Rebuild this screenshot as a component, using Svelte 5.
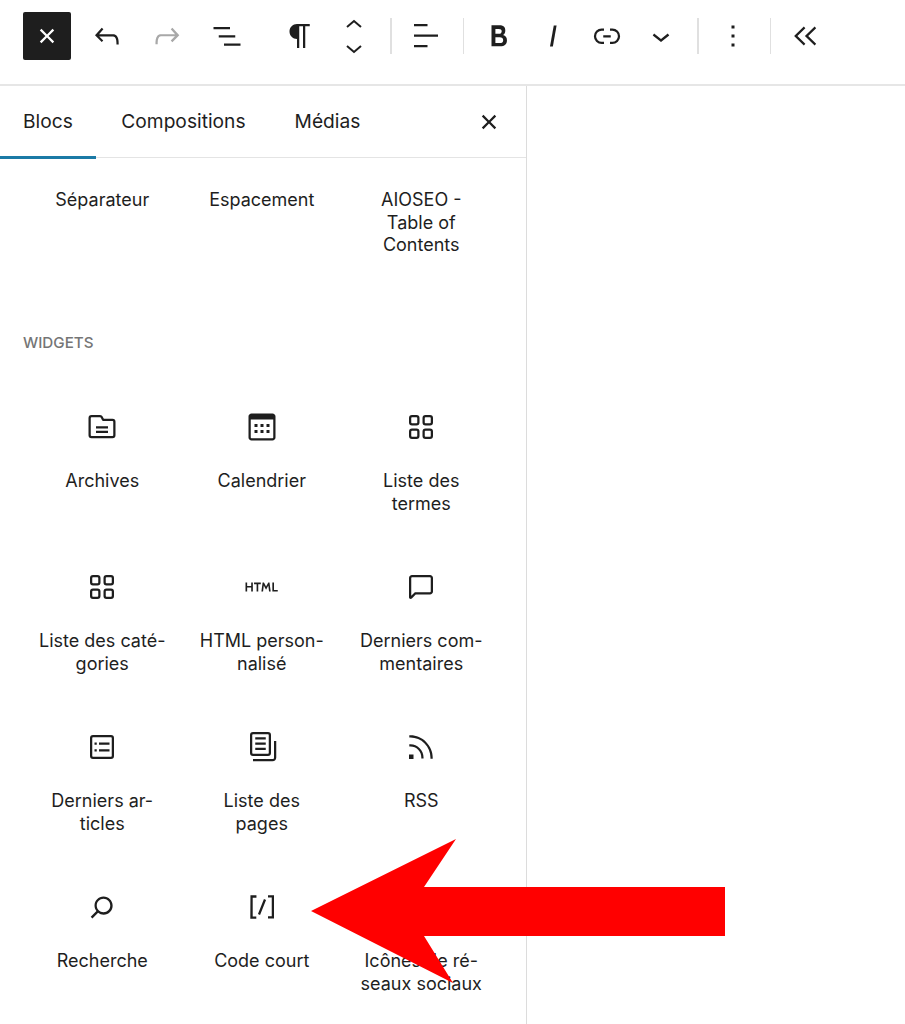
<script>
  const paths = {
    closeSmall: 'M12 13.06l3.712 3.713 1.061-1.06L13.061 12l3.712-3.712-1.06-1.06L12 10.938 8.288 7.227l-1.061 1.06L10.939 12l-3.712 3.712 1.06 1.061L12 13.061z',
    undo: 'M18.3 11.7c-.6-.6-1.4-.9-2.3-.9H6.7l2.9-3.3-1.1-1-4.5 5L8.5 16l1-1-2.7-2.7H16c.5 0 .9.2 1.3.5 1 1 1 3.4 1 4.5v.3h1.5v-.2c0-1.5 0-4.3-1.5-5.7z',
    redo: 'M15.6 6.5l-1.1 1 2.9 3.3H8c-.9 0-1.7.3-2.3.9-1.4 1.5-1.4 4.2-1.4 5.6v.2h1.5v-.3c0-1.1 0-3.5 1-4.5.3-.3.7-.5 1.3-.5h9.2L14.5 15l1.1 1.1 4.6-4.6-4.6-5z',
    listView: 'M3 6h11v1.5H3V6Zm3.5 5.5h11V13h-11v-1.5ZM21 17H10v1.5h11V17Z',
    paragraph: 'm9.99609 14v-.2251l.00391.0001v6.225h1.5v-14.5h2.5v14.5h1.5v-14.5h3v-1.5h-8.50391c-2.76142 0-5 2.23858-5 5 0 2.7614 2.23858 5 5 5z',
    alignLeft: 'M13 5.5H4V4h9v1.5Zm7 7H4V11h16v1.5Zm-7 7H4V18h9v1.5Z',
    bold: 'M14.7 11.3c1-.6 1.5-1.6 1.5-3 0-2.3-1.3-3.4-4-3.4H7v14h5.8c1.4 0 2.5-.3 3.3-1 .8-.7 1.2-1.7 1.2-2.9.1-1.9-.8-3.1-2.6-3.7zm-5.1-4h2.3c.6 0 1.1.1 1.4.4.3.3.5.7.5 1.2s-.2 1-.5 1.2c-.3.3-.8.4-1.4.4H9.6V7.3zm4.6 9c-.4.3-1 .4-1.7.4H9.6v-3.9h2.9c.7 0 1.3.2 1.7.5.4.3.6.8.6 1.5s-.2 1.2-.6 1.5z',
    italic: 'M12.5 5L10 19h1.9l2.5-14z',
    link: 'M10 17.389H8.444A5.194 5.194 0 1 1 8.444 7H10v1.5H8.444a3.694 3.694 0 0 0 0 7.389H10v1.5ZM14 7h1.556a5.194 5.194 0 0 1 0 10.39H14v-1.5h1.556a3.694 3.694 0 0 0 0-7.39H14V7Zm-4.5 6h5v-1.5h-5V13Z',
    chevronDown: 'M17.5 11.6L12 16l-5.5-4.4.9-1.2L12 14l4.5-3.6 1 1.2z',
    more: 'M13 19h-2v-2h2v2zm0-6h-2v-2h2v2zm0-6h-2V5h2v2z',
    collapse: 'M10.9 6.8 5.6 12l5.3 5.2-1 1.1L3.4 12l6.5-6.3zM18.1 6.8 12.8 12l5.3 5.2-1 1.1L10.6 12l6.5-6.3z',
    archive: 'M11.934 7.406a1 1 0 0 0 .914.594H19a.5.5 0 0 1 .5.5v9a.5.5 0 0 1-.5.5H5a.5.5 0 0 1-.5-.5V6a.5.5 0 0 1 .5-.5h5.764a.5.5 0 0 1 .447.276l.723 1.63Zm1.064-1.216a.5.5 0 0 0 .462.31H19a2 2 0 0 1 2 2v9a2 2 0 0 1-2 2H5a2 2 0 0 1-2-2V6a2 2 0 0 1 2-2h5.764a2 2 0 0 1 1.789 1.106l.445 1.084ZM8 13V11.5h8V13H8Zm0 3v-1.5h8V16H8Z',
    calendar: 'M19 3H5c-1.1 0-2 .9-2 2v14c0 1.1.9 2 2 2h14c1.1 0 2-.9 2-2V5c0-1.1-.9-2-2-2zm.5 16c0 .3-.2.5-.5.5H5c-.3 0-.5-.2-.5-.5V7h15v12zM9 10H7v2h2v-2zm0 4H7v2h2v-2zm4-4h-2v2h2v-2zm4 0h-2v2h2v-2zm-4 4h-2v2h2v-2zm4 0h-2v2h2v-2z',
    category: 'M6 5.5h3a.5.5 0 01.5.5v3a.5.5 0 01-.5.5H6a.5.5 0 01-.5-.5V6a.5.5 0 01.5-.5zM4 6a2 2 0 012-2h3a2 2 0 012 2v3a2 2 0 01-2 2H6a2 2 0 01-2-2V6zm11-.5h3a.5.5 0 01.5.5v3a.5.5 0 01-.5.5h-3a.5.5 0 01-.5-.5V6a.5.5 0 01.5-.5zM13 6a2 2 0 012-2h3a2 2 0 012 2v3a2 2 0 01-2 2h-3a2 2 0 01-2-2V6zm5 8.5h-3a.5.5 0 00-.5.5v3a.5.5 0 00.5.5h3a.5.5 0 00.5-.5v-3a.5.5 0 00-.5-.5zM15 13a2 2 0 00-2 2v3a2 2 0 002 2h3a2 2 0 002-2v-3a2 2 0 00-2-2h-3zm-9 1.5h3a.5.5 0 01.5.5v3a.5.5 0 01-.5.5H6a.5.5 0 01-.5-.5v-3a.5.5 0 01.5-.5zM4 15a2 2 0 012-2h3a2 2 0 012 2v3a2 2 0 01-2 2H6a2 2 0 01-2-2v-3z',
    html: 'M4.8 11.4H2.1V9H1v6h1.1v-2.6h2.7V15h1.1V9H4.8v2.4zm1.9-1.3h1.7V15h1.1v-4.9h1.7V9H6.7v1.1zM16.2 9l-1.5 2.7L13.3 9h-.9l-.8 6h1.1l.5-4 1.5 2.8 1.5-2.8.5 4h1.1L17 9h-.8zm3.8 5V9h-1.1v6h3.6v-1H20z',
    comment: 'M18 4H6c-1.1 0-2 .9-2 2v12.9c0 .6.5 1.1 1.1 1.1.3 0 .5-.1.8-.3L8.5 17H18c1.1 0 2-.9 2-2V6c0-1.1-.9-2-2-2zm.5 11c0 .3-.2.5-.5.5H7.9l-2.4 2.4V6c0-.3.2-.5.5-.5h12c.3 0 .5.2.5.5v9z',
    postList: 'M18 5.5H6a.5.5 0 00-.5.5v12a.5.5 0 00.5.5h12a.5.5 0 00.5-.5V6a.5.5 0 00-.5-.5zM6 4h12a2 2 0 012 2v12a2 2 0 01-2 2H6a2 2 0 01-2-2V6a2 2 0 012-2zm1 5h1.5v1.5H7V9zm1.5 4.5H7V15h1.5v-1.5zM10 9h7v1.5h-7V9zm7 4.5h-7V15h7v-1.5z',
    pages: 'M14.5 5.5h-7V7h7V5.5ZM7.5 9h7v1.5h-7V9Zm7 3.5h-7V14h7v-1.5ZM16 2H6a2 2 0 0 0-2 2v12a2 2 0 0 0 2 2h10a2 2 0 0 0 2-2V4a2 2 0 0 0-2-2ZM6 3.5h10a.5.5 0 0 1 .5.5v12a.5.5 0 0 1-.5.5H6a.5.5 0 0 1-.5-.5V4a.5.5 0 0 1 .5-.5ZM20 8v11c0 .69-.31 1-.999 1H6v1.5h13.001c1.52 0 2.499-.982 2.499-2.5V8H20Z',
    rss: 'M5 10.2h-.8v1.5H5c1.9 0 3.8.8 5.1 2.1 1.4 1.4 2.1 3.2 2.1 5.1v.8h1.5V19c0-2.3-.9-4.5-2.6-6.2-1.6-1.6-3.8-2.6-6.1-2.6zm10.4-1.6C12.6 5.8 8.9 4.2 5 4.2h-.8v1.5H5c3.5 0 6.9 1.4 9.4 3.9s3.9 5.8 3.9 9.4v.8h1.5V19c0-3.9-1.6-7.6-4.4-10.4zM4 20h3v-3H4v3z',
    search: 'M13 5c-3.3 0-6 2.7-6 6 0 1.4.5 2.7 1.3 3.7l-3.8 3.8 1.1 1.1 3.8-3.8c1 .8 2.3 1.3 3.7 1.3 3.3 0 6-2.7 6-6S16.3 5 13 5zm0 10.5c-2.5 0-4.5-2-4.5-4.5s2-4.5 4.5-4.5 4.5 2 4.5 4.5-2 4.5-4.5 4.5z',
    shortcode: 'M16 4.2v1.5h2.5v12.5H16v1.5h4V4.2h-4zM4.2 19.8h4v-1.5H5.8V5.8h2.5V4.2h-4l-.1 15.6zm5.1-3.1l1.4.6 4-10-1.4-.6-4 10z'
  };

  const topBlocks = ['Séparateur', 'Espacement', 'AIOSEO -\nTable of\nContents'];
  const widgets = [
    ['archive', 'Archives'], ['calendar', 'Calendrier'], ['category', 'Liste des\ntermes'],
    ['category', 'Liste des caté-\ngories'], ['html', 'HTML person-\nnalisé'], ['comment', 'Derniers com-\nmentaires'],
    ['postList', 'Derniers ar-\nticles'], ['pages', 'Liste des\npages'], ['rss', 'RSS'],
    ['search', 'Recherche'], ['shortcode', 'Code court'], [null, 'Icônes de ré-\nseaux sociaux']
  ];
</script>

{#snippet icon(name)}
  <svg class="icon" viewBox="0 0 24 24" aria-hidden="true"><path fill-rule="evenodd" d={paths[name]} /></svg>
{/snippet}

<div class="page">
  <header class="toolbar">
    <button class="tb close-main">{@render icon('closeSmall')}</button>
    <button class="tb w60 ml6">{@render icon('undo')}</button>
    <button class="tb w60 off">{@render icon('redo')}</button>
    <button class="tb w60">{@render icon('listView')}</button>
    <button class="tb w54 ml16">{@render icon('paragraph')}</button>
    <div class="mover">
      <svg class="chev" viewBox="0 0 18 10"><path d="M2 8l7-6 7 6" /></svg>
      <svg class="chev" viewBox="0 0 18 10"><path d="M2 2l7 6 7-6" /></svg>
    </div>
    <span class="sep s1"></span>
    <button class="tb w60 a">{@render icon('alignLeft')}</button>
    <span class="sep s2"></span>
    <button class="tb w54 b">{@render icon('bold')}</button>
    <button class="tb w54">{@render icon('italic')}</button>
    <button class="tb w54">{@render icon('link')}</button>
    <button class="tb w54">{@render icon('chevronDown')}</button>
    <span class="sep s3"></span>
    <button class="tb w60 d">{@render icon('more')}</button>
    <span class="sep s4"></span>
    <button class="tb w60 c">{@render icon('collapse')}</button>
  </header>

  <div class="body">
    <aside class="panel">
      <nav class="tabs">
        <span class="tab active">Blocs</span>
        <span class="tab t2">Compositions</span>
        <span class="tab t3">Médias</span>
        <button class="tb panel-close">{@render icon('closeSmall')}</button>
      </nav>
      <div class="scroll">
        <div class="grid first">
          {#each topBlocks as label}
            <div class="cell"><span class="label">{label}</span></div>
          {/each}
        </div>
        <h2>Widgets</h2>
        <div class="grid">
          {#each widgets as [name, label]}
            <div class="cell">
              <span class="icon-slot">{#if name}{@render icon(name)}{/if}</span>
              <span class="label">{label}</span>
            </div>
          {/each}
        </div>
      </div>
    </aside>
    <main class="canvas"></main>
  </div>

  <svg class="arrow" viewBox="0 0 905 1024" aria-hidden="true">
    <polygon points="311,911 456,839 424,887 725,887 725,936 424,936 453,983" />
  </svg>
</div>

<style>
  :global(body) {
    margin: 0;
    background: #fff;
  }
  .page {
    position: relative;
    width: 905px;
    height: 1024px;
    overflow: hidden;
    background: #fff;
    color: #1e1e1e;
    font-family: Inter, "Liberation Sans", sans-serif;
  }
  .toolbar {
    box-sizing: border-box;
    height: 86px;
    display: flex;
    align-items: flex-start;
    padding: 12px 0 0 23px;
    border-bottom: 2px solid #e6e6e6;
  }
  .tb {
    display: flex;
    align-items: center;
    justify-content: center;
    height: 48px;
    padding: 0;
    border: 0;
    background: none;
    color: #1e1e1e;
    flex: none;
  }
  .icon {
    display: block;
    width: 36px;
    height: 36px;
    fill: currentColor;
  }
  .close-main {
    width: 48px;
    background: #1e1e1e;
    color: #fff;
    border-radius: 2px;
  }
  .w60 { width: 60px; }
  .w54 { width: 54px; }
  .ml6 { margin-left: 6px; }
  .ml16 { margin-left: 16px; }
  .off { color: #a8a8a8; }
  .mover {
    width: 54px;
    height: 48px;
    flex: none;
    display: flex;
    flex-direction: column;
    align-items: center;
    justify-content: space-between;
    padding: 7px 0 6px;
    box-sizing: border-box;
  }
  .chev {
    display: block;
    width: 18px;
    height: 10px;
    fill: none;
    stroke: #1e1e1e;
    stroke-width: 2;
  }
  .sep {
    flex: none;
    width: 1.5px;
    height: 36px;
    margin-top: 6px;
    background: #e0e0e0;
  }
  .s1 { margin-left: 9px; }
  .a { margin-left: 4.5px; }
  .s2 { margin-left: 6.5px; }
  .b { margin-left: 8px; }
  .s3 { margin-left: 9px; }
  .d { margin-left: 4.5px; }
  .s4 { margin-left: 6.5px; }
  .c { margin-left: 5.5px; }

  .body {
    display: flex;
    height: 938px;
  }
  .panel {
    box-sizing: content-box;
    width: 526px;
    flex: none;
    border-right: 1.5px solid #dcdcdc;
    overflow: hidden;
  }
  .tabs {
    position: relative;
    display: flex;
    align-items: center;
    height: 72px;
    border-bottom: 1.5px solid #e4e4e4;
    box-sizing: border-box;
    padding: 0 0 1.5px 23px;
    font-size: 19.2px;
  }
  .tab { line-height: 24px; }
  .tab.active::after {
    content: "";
    position: absolute;
    left: 0;
    bottom: -1.5px;
    width: 96px;
    height: 2.5px;
    background: #1b7aa6;
  }
  .t2 { margin-left: 48.5px; }
  .t3 { margin-left: 49px; }
  .panel-close {
    position: absolute;
    left: 471px;
    top: 12px;
    width: 36px;
  }
  .scroll {
    padding: 31px 25px 0 22.5px;
  }
  .grid {
    display: grid;
    grid-template-columns: repeat(3, 159.5px);
    grid-auto-rows: 160px;
  }
  .grid.first { grid-auto-rows: auto; }
  .cell {
    display: flex;
    flex-direction: column;
    align-items: center;
    text-align: center;
  }
  .icon-slot {
    display: block;
    width: 36px;
    height: 36px;
    margin-top: 17px;
    margin-bottom: 25px;
  }
  .label {
    font-size: 18px;
    line-height: 22.7px;
    white-space: pre-line;
  }
  h2 {
    margin: 76px 0 39px;
    font-size: 15.2px;
    line-height: 20px;
    font-weight: 500;
    color: #757575;
    text-transform: uppercase;
    padding-left: 0.5px;
  }
  .canvas { flex: 1; }
  .arrow {
    position: absolute;
    left: 0;
    top: 0;
    width: 905px;
    height: 1024px;
    pointer-events: none;
  }
  .arrow polygon { fill: #ff0000; }
</style>
